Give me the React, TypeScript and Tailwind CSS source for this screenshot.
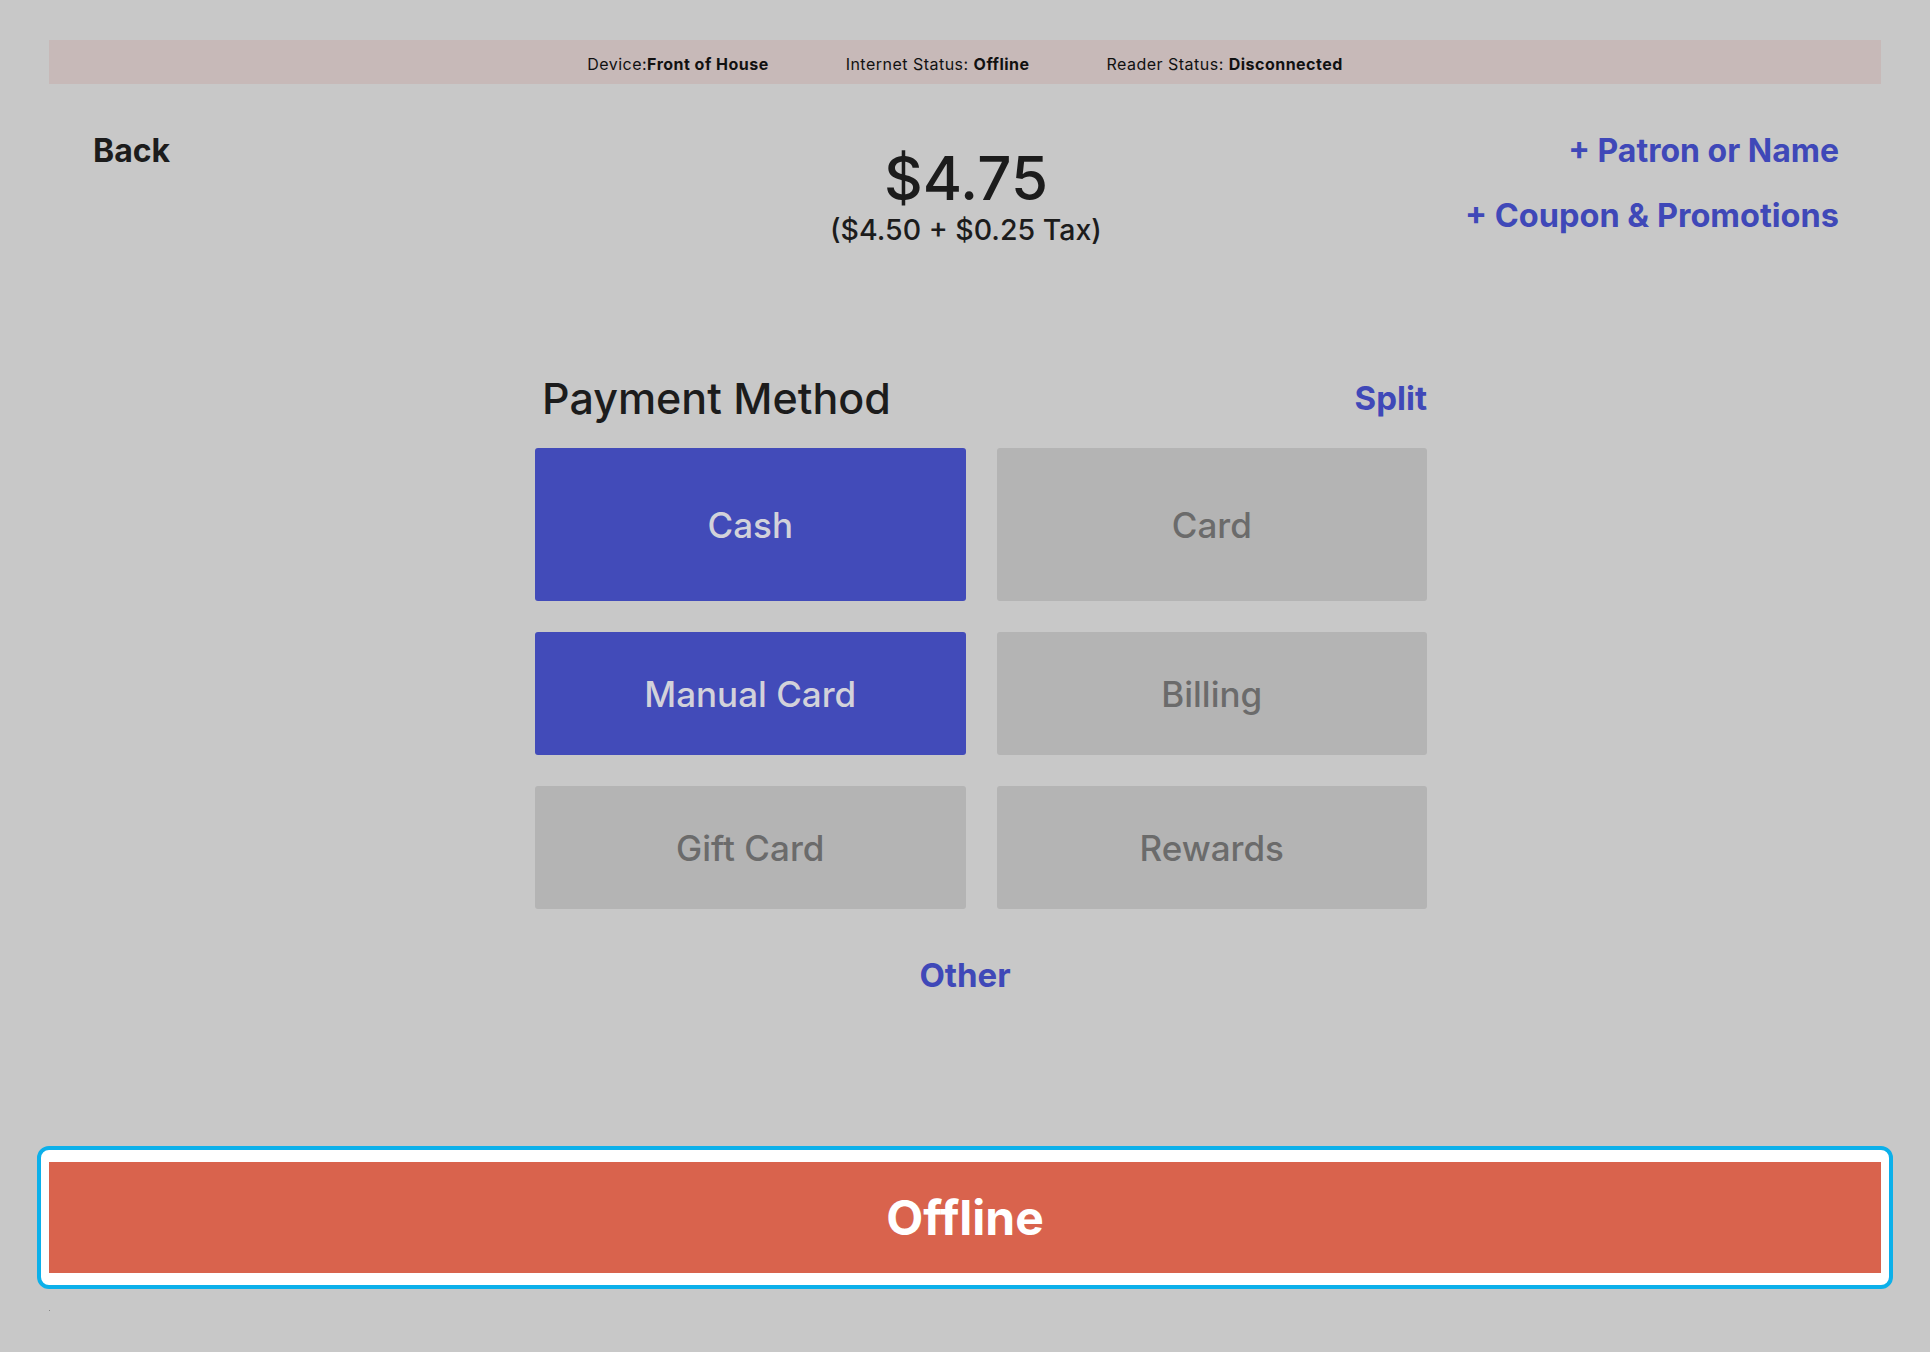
import * as React from 'react';

type Method = {
  label: string;
  active: boolean;
  tall?: boolean;
};

const methods: Method[] = [
  { label: 'Cash', active: true, tall: true },
  { label: 'Card', active: false, tall: true },
  { label: 'Manual Card', active: true },
  { label: 'Billing', active: false },
  { label: 'Gift Card', active: false },
  { label: 'Rewards', active: false },
];

function StatusBar() {
  return (
    <div className="mx-[49px] h-[44px] pt-[3px] bg-[#c7b9b8] flex items-center justify-center gap-[77px] text-[16px] tracking-[0.03em] text-[#111]">
      <span>
        Device:<b className="font-bold">Front of House</b>
      </span>
      <span>
        Internet Status: <b className="font-bold">Offline</b>
      </span>
      <span>
        Reader Status: <b className="font-bold">Disconnected</b>
      </span>
    </div>
  );
}

function MethodButton({ method }: { method: Method }) {
  const tone = method.active
    ? 'bg-[#424bb9] text-[#d2d2da]'
    : 'bg-[#b4b4b4] text-[#6b6b6b]';
  return (
    <button
      className={`${tone} ${method.tall ? 'h-[153px]' : 'h-[123px]'} rounded-[3px] flex items-center justify-center text-[35px] font-medium leading-[40px]`}
    >
      {method.label}
    </button>
  );
}

export default function App() {
  return (
    <div
      className="min-h-[1352px] w-full bg-[#c8c8c8] pt-[40px] text-[#1c1c1c]"
      style={{ fontFamily: 'Inter, "Noto Sans", "Liberation Sans", sans-serif' }}
    >
      <StatusBar />

      <header className="grid grid-cols-[1fr_auto_1fr] pl-[93px] pr-[91px] pt-[47px]">
        <div>
          <button className="text-[32px] font-bold leading-[40px] text-[#1c1c1c]">Back</button>
        </div>

        <div className="flex flex-col items-center pt-[15px]">
          <div className="text-[60px] font-medium leading-[64px]">$4.75</div>
          <div className="mt-[4px] text-[28.5px] font-medium leading-[32px]">($4.50 + $0.25 Tax)</div>
        </div>

        <div className="flex flex-col items-end gap-[25px] text-[32px] font-bold leading-[40px] text-[#3f48b8]">
          <button>+ Patron or Name</button>
          <button className="text-[32.5px]">+ Coupon &amp; Promotions</button>
        </div>
      </header>

      <section className="mx-auto w-[924px] pl-[32px] mt-[127px]">
        <div className="flex items-center justify-between pl-[7px]">
          <h2 className="text-[43px] font-medium leading-[50px] text-[#1c1c1c]">Payment Method</h2>
          <button className="text-[33px] font-bold leading-[40px] text-[#3f48b8]">Split</button>
        </div>

        <div className="mt-[25px] grid grid-cols-2 gap-x-[31px] gap-y-[31px]">
          {methods.map((m) => (
            <MethodButton key={m.label} method={m} />
          ))}
        </div>
      </section>

      <div className="mt-[46px] flex justify-center">
        <button className="text-[33px] font-bold leading-[40px] text-[#3f48b8]">Other</button>
      </div>

      <div className="mx-[37px] mt-[151px] rounded-[12px] border-4 border-[#0cb0ea] bg-white px-[8px] py-[12px]">
        <div className="h-[111px] bg-[#d9634d] flex items-center justify-center text-[48px] font-bold text-white">
          Offline
        </div>
      </div>

      <div className="ml-[49px] mt-[21px] h-[1px] w-[1px] bg-[#8a8a8a]" />
    </div>
  );
}
